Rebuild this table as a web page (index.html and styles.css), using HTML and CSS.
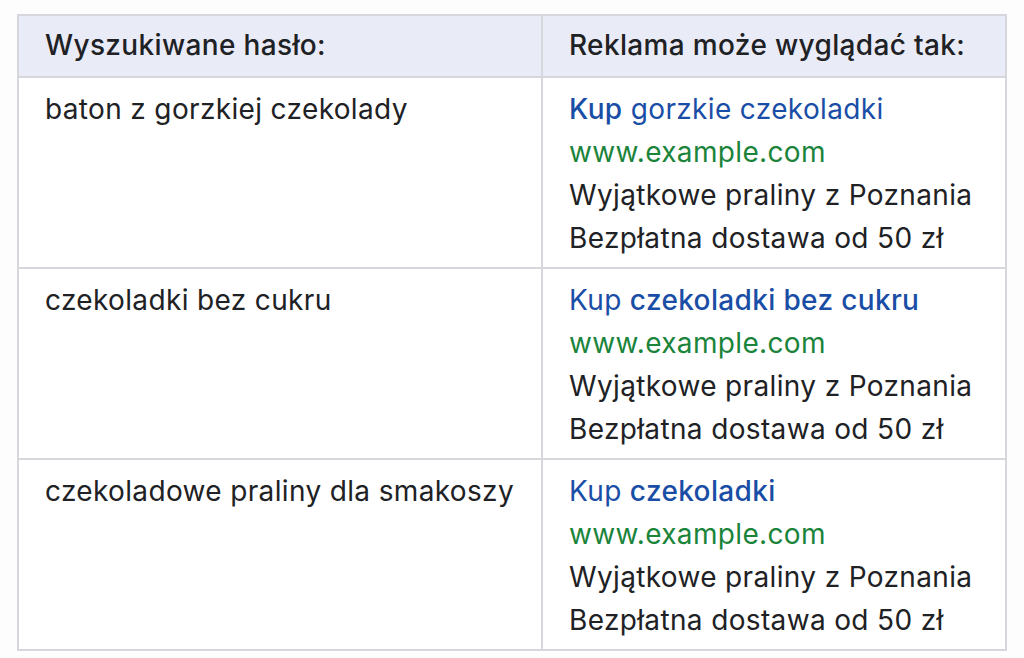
FILE: index.html
```html
<!DOCTYPE html>
<html lang="pl">
<head>
  <meta charset="UTF-8">
  <meta name="viewport" content="width=device-width, initial-scale=1.0">
  <title>Przykłady reklam</title>
  <link rel="stylesheet" href="styles.css">
</head>
<body>
  <!-- Ad examples table -->
  <table class="ads-table">
    <colgroup>
      <col class="col-query">
      <col class="col-ad">
    </colgroup>
    <thead>
      <tr>
        <th>Wyszukiwane hasło:</th>
        <th>Reklama może wyglądać tak:</th>
      </tr>
    </thead>
    <tbody>
      <tr>
        <td>baton z gorzkiej czekolady</td>
        <td>
          <div class="ad-title"><b>Kup</b> gorzkie czekoladki</div>
          <div class="ad-url">www.example.com</div>
          <div>Wyjątkowe praliny z Poznania</div>
          <div>Bezpłatna dostawa od 50 zł</div>
        </td>
      </tr>
      <tr>
        <td>czekoladki bez cukru</td>
        <td>
          <div class="ad-title">Kup <b>czekoladki bez cukru</b></div>
          <div class="ad-url">www.example.com</div>
          <div>Wyjątkowe praliny z Poznania</div>
          <div>Bezpłatna dostawa od 50 zł</div>
        </td>
      </tr>
      <tr>
        <td>czekoladowe praliny dla smakoszy</td>
        <td>
          <div class="ad-title">Kup <b>czekoladki</b></div>
          <div class="ad-url">www.example.com</div>
          <div>Wyjątkowe praliny z Poznania</div>
          <div>Bezpłatna dostawa od 50 zł</div>
        </td>
      </tr>
    </tbody>
  </table>
</body>
</html>
```

FILE: styles.css
```css
body {
  margin: 0;
  padding: 14px 0 0 17px;
  background-color: #fdfdfd;
  font-family: Inter, "Open Sans", sans-serif;
  color: #202124;
}

.ads-table {
  border-collapse: collapse;
  table-layout: fixed;
  width: 988px;
  font-size: 28px;
  letter-spacing: 0.35px;
  line-height: 43px;
}

.col-query {
  width: 524px;
}

.col-ad {
  width: 464px;
}

.ads-table th,
.ads-table td {
  border: 2px solid #d6d7dc;
  padding: 10px 10px 7px 26px;
  text-align: left;
  vertical-align: top;
  white-space: nowrap;
}

.ads-table th {
  padding-top: 8px;
  padding-bottom: 9px;
  background-color: #e9ebf7;
  font-weight: 500;
}

.ads-table td {
  background-color: #ffffff;
  font-weight: 400;
}

.ad-title {
  color: #1a4ea6;
}

.ad-title b {
  font-weight: 500;
}

.ad-url {
  color: #1b843b;
}
```
